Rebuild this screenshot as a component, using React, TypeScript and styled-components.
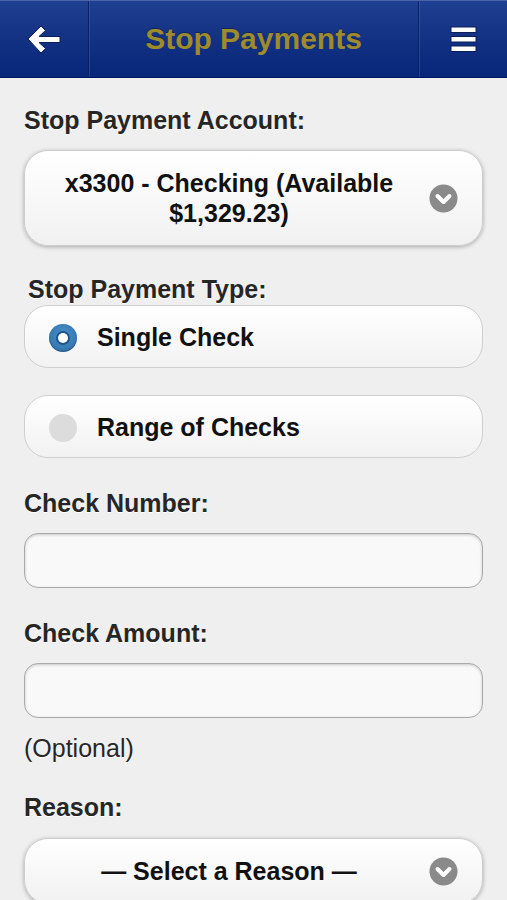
import styled, { createGlobalStyle } from "styled-components";

const GlobalStyle = createGlobalStyle`
  html, body {
    margin: 0;
    padding: 0;
    background: #efefef;
  }
  body {
    font-family: "Liberation Sans", Arial, Helvetica, sans-serif;
    color: #222;
  }
`;

const Header = styled.header`
  display: grid;
  grid-template-columns: 89px 1fr 89px;
  height: 78px;
  background: linear-gradient(to bottom, #1f3f92 0%, #163485 40%, #08267a 100%);
  border-top: 1px solid #4a64a8;
  border-bottom: 1px solid #001560;
  box-sizing: border-box;
`;

const HeaderCell = styled.div<{ $divider?: "left" | "right" }>`
  display: flex;
  align-items: center;
  justify-content: center;
  ${(p) =>
    p.$divider === "right" &&
    `border-right: 1px solid #0a2168; box-shadow: 1px 0 0 rgba(120,140,200,0.25);`}
  ${(p) =>
    p.$divider === "left" &&
    `border-left: 1px solid #0a2168; box-shadow: inset 1px 0 0 rgba(120,140,200,0.25);`}
`;

const Title = styled.h1`
  margin: 0;
  font-size: 30px;
  font-weight: bold;
  color: #9e8b2b;
  text-shadow: 0 -1px 0 rgba(0, 0, 0, 0.3);
`;

const Content = styled.main`
  padding: 27px 24px 0 24px;
  display: flex;
  flex-direction: column;
`;

const Label = styled.div<{ $indent?: number; $top: number; $normal?: boolean }>`
  font-size: 25px;
  line-height: 30px;
  font-weight: ${(p) => (p.$normal ? "normal" : "bold")};
  color: #262626;
  margin-top: ${(p) => p.$top}px;
  padding-left: ${(p) => p.$indent ?? 0}px;
  text-shadow: 0 1px 0 #fff;
`;

const SelectButton = styled.div<{ $top: number }>`
  margin-top: ${(p) => p.$top}px;
  display: flex;
  align-items: center;
  padding: 17px 24px 17px 24px;
  border: 1px solid #cdcdcd;
  border-radius: 24px;
  background: linear-gradient(to bottom, #ffffff, #f1f1f1);
  box-shadow: 0 1px 4px rgba(0, 0, 0, 0.3);
`;

const SelectText = styled.div`
  flex: 1;
  text-align: center;
  font-size: 25px;
  line-height: 30px;
  font-weight: bold;
  color: #111;
  padding-right: 20px;
`;

const RadioRow = styled.div<{ $top: number }>`
  margin-top: ${(p) => p.$top}px;
  height: 63px;
  box-sizing: border-box;
  display: flex;
  align-items: center;
  gap: 20px;
  padding: 2px 0 0 24px;
  border: 1px solid #cfcfcf;
  border-radius: 24px;
  background: linear-gradient(to bottom, #ffffff, #f2f2f2);
  font-size: 25px;
  font-weight: bold;
  color: #111;
`;

const RadioDot = styled.span<{ $checked?: boolean }>`
  width: 28px;
  height: 28px;
  border-radius: 50%;
  box-sizing: border-box;
  display: flex;
  align-items: center;
  justify-content: center;
  background: ${(p) =>
    p.$checked
      ? "radial-gradient(circle at 50% 40%, #4a90cc, #2c6ea6)"
      : "#dcdcdc"};
  box-shadow: ${(p) => (p.$checked ? "inset 0 -1px 2px rgba(0,0,0,0.3)" : "none")};
  &::after {
    content: "";
    display: ${(p) => (p.$checked ? "block" : "none")};
    width: 10px;
    height: 10px;
    border-radius: 50%;
    background: #fff;
    box-shadow: 0 0 0 2px #1f5588;
  }
`;

const TextInput = styled.input<{ $top: number }>`
  margin-top: ${(p) => p.$top}px;
  height: 55px;
  box-sizing: border-box;
  width: 100%;
  border: 1px solid #a9a9a9;
  border-radius: 14px;
  background: #f9f9f9;
  box-shadow: inset 0 1px 3px rgba(0, 0, 0, 0.2);
  font-size: 22px;
  font-family: inherit;
  padding: 0 14px;
  outline: none;
`;

function BackArrow() {
  return (
    <svg width="34" height="29" viewBox="0 0 34 29">
      <path
        d="M1 14 L14 1 L18.5 5.5 L12 11.5 L33 11.5 L33 17.5 L12 17.5 L18.5 23.5 L14 28 Z"
        fill="#fff"
        stroke="#0a1f5c"
        strokeWidth="1"
        strokeLinejoin="miter"
      />
    </svg>
  );
}

function MenuIcon() {
  return (
    <svg width="27" height="27" viewBox="0 0 27 27">
      {[1, 10.5, 20].map((y) => (
        <rect key={y} x="1" y={y} width="25" height="5.5" fill="#fff" stroke="#0a1f5c" strokeWidth="1" />
      ))}
    </svg>
  );
}

function Chevron() {
  return (
    <svg width="29" height="29" viewBox="0 0 29 29">
      <circle cx="14.5" cy="14.5" r="14" fill="#8a8a8a" />
      <path
        d="M8.5 12 L14.5 18 L20.5 12"
        fill="none"
        stroke="#fff"
        strokeWidth="4"
        strokeLinecap="round"
        strokeLinejoin="round"
      />
    </svg>
  );
}

export default function App() {
  return (
    <>
      <GlobalStyle />
      <Header>
        <HeaderCell $divider="right">
          <BackArrow />
        </HeaderCell>
        <HeaderCell>
          <Title>Stop Payments</Title>
        </HeaderCell>
        <HeaderCell $divider="left">
          <MenuIcon />
        </HeaderCell>
      </Header>
      <Content>
        <Label $top={0}>Stop Payment Account:</Label>
        <SelectButton $top={15}>
          <SelectText>
            x3300 - Checking (Available
            <br />
            $1,329.23)
          </SelectText>
          <Chevron />
        </SelectButton>

        <Label $top={28} $indent={4}>Stop Payment Type:</Label>
        <RadioRow $top={1}>
          <RadioDot $checked />
          Single Check
        </RadioRow>
        <RadioRow $top={27}>
          <RadioDot />
          Range of Checks
        </RadioRow>

        <Label $top={30}>Check Number:</Label>
        <TextInput $top={15} type="text" />

        <Label $top={30}>Check Amount:</Label>
        <TextInput $top={15} type="text" />
        <Label $top={15} $normal>(Optional)</Label>

        <Label $top={29}>Reason:</Label>
        <SelectButton $top={16}>
          <SelectText>— Select a Reason —</SelectText>
          <Chevron />
        </SelectButton>
      </Content>
    </>
  );
}
